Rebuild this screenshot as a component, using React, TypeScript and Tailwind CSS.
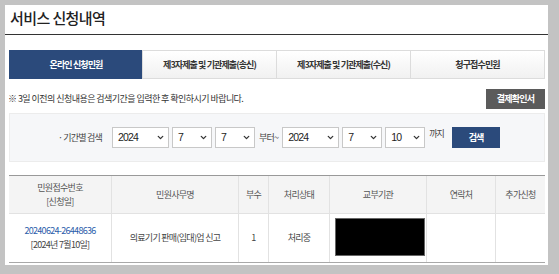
import { ChevronDown } from "lucide-react";

const KR = "font-['Noto_Sans_CJK_KR',sans-serif]";

const tabs = ["온라인 신청민원", "제3자제출 및 기관제출(송신)", "제3자제출 및 기관제출(수신)", "청구접수민원"];

const cols = [
  { label: ["민원접수번호", "[신청일]"], w: "w-[103px]" },
  { label: ["민원사무명"], w: "w-[127px]" },
  { label: ["부수"], w: "w-[30px]" },
  { label: ["처리상태"], w: "w-[61px]" },
  { label: ["교부기관"], w: "w-[97px]" },
  { label: ["연락처"], w: "w-[69px]" },
  { label: ["추가신청"], w: "w-[49px]" },
];

interface SelectProps {
  value: string;
  wide?: boolean;
}

const Select = ({ value, wide }: SelectProps) => (
  <div
    className={`flex items-center justify-between h-[21px] bg-white border border-[#c8c8c8] pl-[5px] pr-[3px] font-['Liberation_Sans',sans-serif] text-[10.5px] text-[#222] ${
      wide ? "w-[57px]" : "w-[40px]"
    }`}
  >
    <span>{value}</span>
    <ChevronDown size={9} strokeWidth={3.5} className="text-[#333]" />
  </div>
);

function App() {
  return (
    <div className={`w-[559px] h-[274px] bg-[#c3c3c3] pt-[5px] pl-[5px] ${KR}`}>
      <div className="w-[543px] h-[260px] bg-white">
        {/* 제목 */}
        <div className="h-[30px] border-b border-[#333] pl-[5px] pt-[3px]">
          <h1 className="text-[15px] font-medium tracking-[-0.6px] text-[#222] leading-[20px]">서비스 신청내역</h1>
        </div>

        <div className="pl-[4px] pr-[3px]">
          {/* 탭 */}
          <div className="mt-[15px] grid grid-cols-4 h-[29px]">
            {tabs.map((t, i) => (
              <div
                key={t}
                className={`flex items-center justify-center text-[9px] font-bold tracking-[-0.9px] ${
                  i === 0
                    ? "bg-[#2b4a7b] text-white"
                    : "bg-gradient-to-b from-white to-[#f1f1f1] border border-[#dcdcdc] text-[#333] -ml-px"
                }`}
              >
                {t}
              </div>
            ))}
          </div>

          {/* 안내 */}
          <div className="mt-[10px] h-[20px] flex items-center justify-between">
            <p className="-ml-[1px] text-[9px] tracking-[-0.55px] text-[#333]">
              ※ 3일 이전의 신청내용은 검색기간을 입력한 후 확인하시기 바랍니다.
            </p>
            <button className="w-[59px] h-[20px] bg-[#5b5b5b] text-white text-[9px] font-bold tracking-[-0.8px]">
              결제확인서
            </button>
          </div>

          {/* 검색 */}
          <div className="mt-[4px] h-[49px] bg-[#f6f7f9] border border-[#ececec] flex items-center justify-center gap-[3px] pl-[4px] text-[9px] tracking-[-0.8px] text-[#444]">
            <span className="mr-[7px]">· 기간별 검색</span>
            <Select value="2024" wide />
            <Select value="7" />
            <Select value="7" />
            <span className="mx-[1px]">부터~</span>
            <Select value="2024" wide />
            <Select value="7" />
            <Select value="10" />
            <span className="ml-[1px] self-start mt-[13px]">까지</span>
            <button className="ml-[5px] w-[48px] h-[21px] bg-[#2b4a7b] text-white text-[9px] font-bold">검색</button>
          </div>

          {/* 목록 */}
          <div className="mt-[13px] border-t border-[#999] border-b border-b-[#a8a8a8] text-[9px] tracking-[-0.7px] text-[#555]">
            <div className="flex h-[38px] bg-[#f4f4f4] border-b border-[#e2e2e2]">
              {cols.map((c, i) => (
                <div
                  key={i}
                  className={`${c.w} flex flex-col items-center justify-center leading-[14px] ${
                    i < cols.length - 1 ? "border-r border-[#e2e2e2]" : ""
                  }`}
                >
                  {c.label.map((l) => (
                    <span key={l}>{l}</span>
                  ))}
                </div>
              ))}
            </div>
            <div className="flex h-[48px] text-[#444]">
              <div className="w-[103px] flex flex-col items-center justify-center leading-[14px] border-r border-[#e2e2e2]">
                <span className="text-[#2a5caa]">20240624-26448636</span>
                <span>[2024년 7월10일]</span>
              </div>
              <div className="w-[127px] flex items-center justify-center border-r border-[#e2e2e2]">
                의료기기 판매(임대)업 신고
              </div>
              <div className="w-[30px] flex items-center justify-center border-r border-[#e2e2e2]">1</div>
              <div className="w-[61px] flex items-center justify-center border-r border-[#e2e2e2]">처리중</div>
              <div className="w-[97px] flex items-start pl-[5px] pt-[4px] border-r border-[#e2e2e2]">
                <div className="w-[90px] h-[38px] bg-black border border-[#666]" />
              </div>
              <div className="w-[69px] border-r border-[#e2e2e2]" />
              <div className="w-[49px]" />
            </div>
          </div>
        </div>
      </div>
    </div>
  );
}

export default App;
